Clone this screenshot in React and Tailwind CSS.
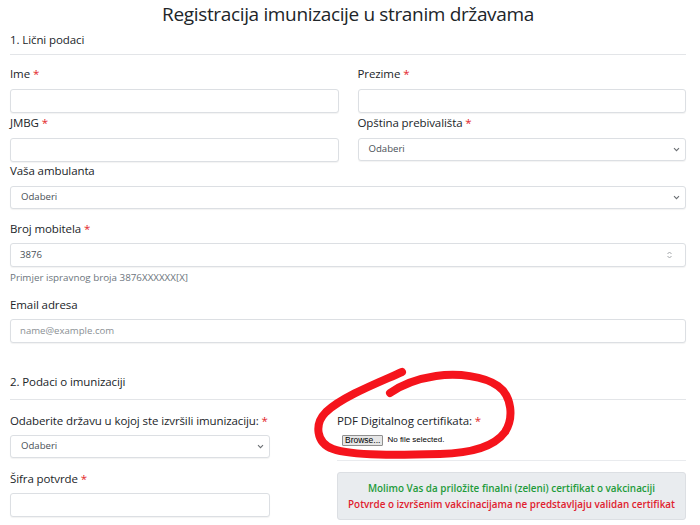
import React from 'react';

const FONT = { fontFamily: '"Open Sans", "Noto Sans", sans-serif' };

function Label({ children, req }) {
  return (
    <div className="whitespace-nowrap text-[11.5px] leading-[16px] tracking-[-0.1px] text-[#212529]">
      {children}
      {req && <span className="text-[#e3262a]"> *</span>}
    </div>
  );
}

function Chevron() {
  return (
    <svg width="7" height="5" viewBox="0 0 7 5" className="shrink-0">
      <path d="M1 1.2 L3.5 3.7 L6 1.2" fill="none" stroke="#6b6f73" strokeWidth="1.1" />
    </svg>
  );
}

function Select() {
  return (
    <div className="flex h-[23px] items-center justify-between rounded-[3px] border border-[#dcdfe3] bg-white pl-[10px] pr-[5px] text-[9.6px] text-[#495057] shadow-[0_1px_1px_rgba(0,0,0,0.05)]">
      <span>Odaberi</span>
      <Chevron />
    </div>
  );
}

function Input({ value, placeholder, spinner }) {
  return (
    <div className="flex h-[24px] items-center justify-between rounded-[3px] border border-[#dcdfe3] bg-white pl-[9px] pr-[12px] text-[9.6px] shadow-[0_1px_1px_rgba(0,0,0,0.05)]">
      <span className={value ? 'text-[#495057]' : 'text-[#8a8f94]'}>{value || placeholder}</span>
      {spinner && (
        <svg width="7" height="10" viewBox="0 0 7 10">
          <path d="M1.5 4 L3.5 2 L5.5 4 M1.5 6 L3.5 8 L5.5 6" fill="none" stroke="#a3a6a9" strokeWidth="1" />
        </svg>
      )}
    </div>
  );
}

export default function App() {
  return (
    <div className="relative h-[525px] w-[700px] overflow-hidden bg-white" style={FONT}>
      <div className="px-[10px] pr-[14px]">
        <h1 className="pt-[2px] text-center text-[19px] leading-[24px] tracking-[-0.35px] text-[#212529]">Registracija imunizacije u stranim državama</h1>

        {/* 1. Lični podaci */}
        <div className="mt-[6px] text-[11.5px] leading-[16px] tracking-[-0.1px] text-[#212529]">1. Lični podaci</div>
        <div className="mt-[6px] border-t border-[#e3e5e8]" />

        <div className="mt-[11px] grid grid-cols-2 gap-x-[19px]">
          <div>
            <Label req>Ime</Label>
            <div className="mt-[7px]"><Input /></div>
          </div>
          <div>
            <Label req>Prezime</Label>
            <div className="mt-[7px]"><Input /></div>
          </div>
          <div className="mt-[2px]">
            <Label req>JMBG</Label>
            <div className="mt-[7px]"><Input /></div>
          </div>
          <div className="mt-[2px]">
            <Label req>Opština prebivališta</Label>
            <div className="mt-[7px]"><Select /></div>
          </div>
        </div>

        <div className="mt-[1px]">
          <Label>Vaša ambulanta</Label>
          <div className="mt-[7px]"><Select /></div>
        </div>

        <div className="mt-[12px]">
          <Label req>Broj mobitela</Label>
          <div className="mt-[6px]"><Input value="3876" spinner /></div>
          <div className="mt-[5px] text-[9.8px] leading-[12px] text-[#6c757d]">Primjer ispravnog broja 3876XXXXXX[X]</div>
        </div>

        <div className="mt-[13px]">
          <Label>Email adresa</Label>
          <div className="mt-[6px]"><Input placeholder="name@example.com" /></div>
        </div>

        {/* 2. Podaci o imunizaciji */}
        <div className="mt-[31px] text-[11.5px] leading-[16px] tracking-[-0.1px] text-[#212529]">2. Podaci o imunizaciji</div>
        <div className="mt-[9px] border-t border-[#e3e5e8]" />

        <div className="mt-[13px] flex">
          <div className="w-[260px]">
            <Label req>Odaberite državu u kojoj ste izvršili imunizaciju:</Label>
            <div className="mt-[6px]"><Select /></div>
            <div className="mt-[13px]"><Label req>Šifra potvrde</Label></div>
            <div className="mt-[6px]"><Input /></div>
          </div>
          <div className="ml-[67px] flex-1">
            <Label req>PDF Digitalnog certifikata:</Label>
            <div className="ml-[5px] mt-[5px] flex items-center gap-[4px]" style={{ fontFamily: '"Liberation Sans", Arial, sans-serif' }}>
              <button className="h-[11px] rounded-[1px] border border-[#8f8f8f] bg-[#e6e6e6] px-[2px] text-[8.5px] leading-[9px] text-black">Browse...</button>
              <span className="text-[8px] text-black">No file selected.</span>
            </div>
            <div className="mt-[14px] border-t border-[#e9ebee]" />
            <div className="mt-[11px] flex h-[48px] flex-col items-center justify-center gap-[4px] rounded-[3px] border border-[#dcdfe3] bg-[#e9ecef] text-[9.9px] font-semibold leading-[12px]">
              <div className="text-[#1e9b3a]">Molimo Vas da priložite finalni (zeleni) certifikat o vakcinaciji</div>
              <div className="text-[#e0202e]">Potvrde o izvršenim vakcinacijama ne predstavljaju validan certifikat</div>
            </div>
          </div>
        </div>
      </div>

      {/* hand-drawn red annotation */}
      <svg className="pointer-events-none absolute left-0 top-0" width="700" height="525" viewBox="0 0 700 525">
        <path
          d="M402 372 C380 382 343 396 326 412 C314 424 316 443 333 449 C352 456 400 455 440 454 C472 453 494 447 505 432 C514 418 512 396 498 386 C484 376 458 373 436 376 C416 379 400 386 390 393"
          fill="none"
          stroke="#f5141c"
          strokeWidth="8"
          strokeLinecap="round"
          strokeLinejoin="round"
        />
      </svg>
    </div>
  );
}
